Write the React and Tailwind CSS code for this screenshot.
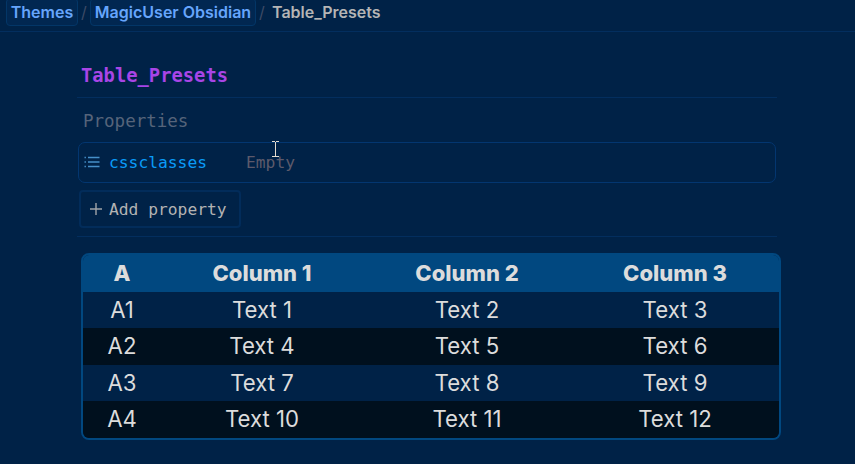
const rows = [
  ["A1", "Text 1", "Text 2", "Text 3"],
  ["A2", "Text 4", "Text 5", "Text 6"],
  ["A3", "Text 7", "Text 8", "Text 9"],
  ["A4", "Text 10", "Text 11", "Text 12"],
];

function Breadcrumbs() {
  return (
    <header className="flex h-8 items-start border-b border-[#032e5e] pl-[6px] text-[16px] font-semibold">
      <span className="-mt-[2px] flex h-7 w-[72px] items-center justify-center rounded-[4px] border border-[#033667] bg-[#012751] text-[#66a5fc]">
        Themes
      </span>
      <span className="flex h-6 w-3 items-center justify-center font-normal text-[#3c4a66]">/</span>
      <span className="-mt-[2px] flex h-7 w-[166px] items-center justify-center whitespace-nowrap rounded-[4px] border border-[#033667] bg-[#012751] text-[#66a5fc]">
        MagicUser Obsidian
      </span>
      <span className="flex h-6 w-3 items-center justify-center font-normal text-[#3c4a66]">/</span>
      <span className="ml-1 flex h-6 items-center text-[#b5b5b5]">Table_Presets</span>
    </header>
  );
}

function ListIcon() {
  return (
    <svg className="h-4 w-4" viewBox="0 0 16 16" fill="none" stroke="#4690c9" strokeWidth="1.3">
      <path d="M4 2.5h11.5M4 7h11.5M4 11.5h11.5M0.5 2.5h1.4M0.5 7h1.4M0.5 11.5h1.4" />
    </svg>
  );
}

function Properties() {
  return (
    <section className="relative h-[140px] w-[700px] border-y border-[#032e5e] font-['DejaVu_Sans_Mono',monospace]">
      <div className="flex h-[44px] items-center pl-[6px] pt-[3px] text-[17.5px] text-[#56647a]">Properties</div>
      <div className="ml-px flex h-[41px] w-[698px] items-center rounded-[7px] border border-[#033670] pl-[5px] text-[16.3px]">
        <ListIcon />
        <span className="ml-[9px] w-[137px] pt-[2px] text-[#0a9bf8]">cssclasses</span>
        <span className="pt-[2px] text-[#5c5a6b]">Empty</span>
      </div>
      <button className="ml-[2px] mt-[7px] flex h-[38px] w-[162px] items-center rounded-[4px] border-2 border-[#022c5a] pl-[9px] text-[16.3px] text-[#b3b3b3]">
        <svg className="h-3 w-3" viewBox="0 0 12 12" fill="none" stroke="#a0a4a8" strokeWidth="1.4">
          <path d="M0 6h12M6 0v12" />
        </svg>
        <span className="ml-[7px] whitespace-nowrap pt-[2px]">Add property</span>
      </button>
      <svg className="absolute left-[194px] top-[43px] h-[17px] w-[9px]" viewBox="0 0 9 17" fill="none" stroke="#e4dccf">
        <path d="M1 .5h3M5 .5h3M4.5 1v15M1 15.5h3M5 15.5h3" />
      </svg>
    </section>
  );
}

function PresetTable() {
  return (
    <div className="ml-1 mt-4 h-[187px] w-[700px] overflow-hidden rounded-[8px] border-2 border-[#014880] text-[22.2px] text-[#dcdcdc]">
      <table className="w-full table-fixed border-collapse text-center">
        <colgroup>
          <col className="w-[78px]" />
          <col className="w-[202px]" />
          <col className="w-[208px]" />
          <col className="w-[208px]" />
        </colgroup>
        <thead>
          <tr className="h-[37px] bg-[#014880] leading-[36px]">
            {["A", "Column 1", "Column 2", "Column 3"].map((label) => (
              <th key={label} className="p-0 pb-px text-[22px] font-extrabold">{label}</th>
            ))}
          </tr>
        </thead>
        <tbody>
          {rows.map((row) => (
            <tr key={row[0]} className="h-[36px] leading-[36px] even:h-[37px] even:bg-[#00101e] even:leading-[35px]">
              {row.map((cell) => (
                <td key={cell} className="p-0 align-top">{cell}</td>
              ))}
            </tr>
          ))}
        </tbody>
      </table>
    </div>
  );
}

export default function App() {
  return (
    <div className="h-[464px] w-full overflow-hidden bg-[#002247] font-['Inter',sans-serif]">
      <Breadcrumbs />
      <main className="pl-[77px]">
        <h1 className="flex h-[65px] items-center pl-1 pt-[23px] font-['DejaVu_Sans_Mono',monospace] text-[18.8px] font-bold text-[#a845e6]">
          Table_Presets
        </h1>
        <Properties />
        <PresetTable />
      </main>
    </div>
  );
}
